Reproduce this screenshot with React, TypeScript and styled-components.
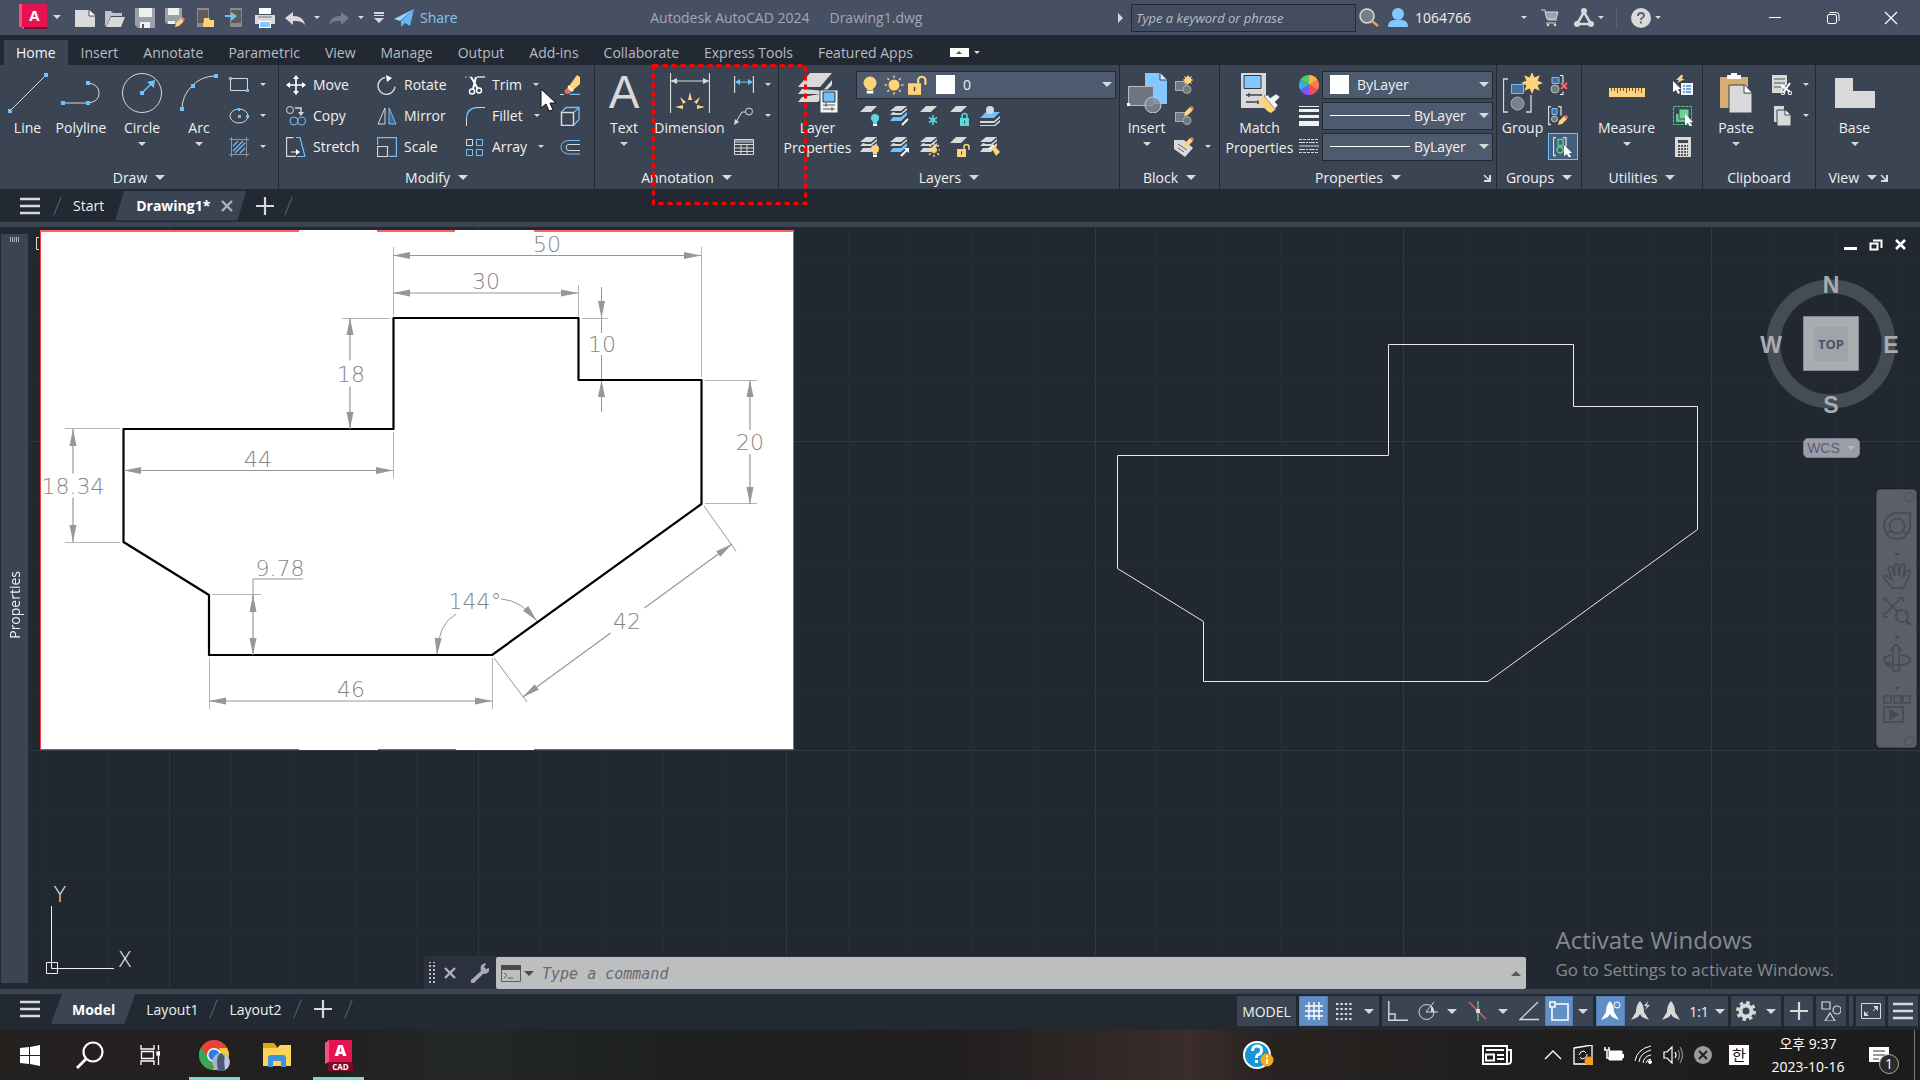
import React from "react";
import styled, { createGlobalStyle, css } from "styled-components";

const C = {
  title: "#474f63",
  dark: "#222933",
  panel: "#3b4453",
  field: "#4e5b6e",
  canvas: "#212830",
  text: "#f0f0f0",
  icon: "#d9d9d9",
  blue: "#6ec0ff",
  yellow: "#ffd37a",
  grey: "#727983",
};

const Global = createGlobalStyle`
  * { box-sizing: border-box; }
  html, body { margin: 0; height: 100%; overflow: hidden; background: ${C.dark}; }
  body, button, input, select { font-family: "Open Sans", "Noto Sans CJK KR", sans-serif; font-size: 14px; color: ${C.text}; }
  button { background: none; border: 0; padding: 0; margin: 0; cursor: default; white-space: nowrap; }
  svg { display: block; flex: none; }
`;

/* ---------- icons ---------- */

const W = C.icon;
const B = C.blue;
const Y = C.yellow;
const G = C.grey;
const star = (cx: number, cy: number, r: number, n = 8) =>
  Array.from({ length: n * 2 }, (_, i) => {
    const a = (Math.PI * i) / n - Math.PI / 2;
    const k = i % 2 ? r * 0.55 : r;
    return `${(cx + k * Math.cos(a)).toFixed(2)},${(cy + k * Math.sin(a)).toFixed(2)}`;
  }).join(" ");

const sheets = (bottom = W) => (
  <>
    <path d="M6 0h11l-6 5H0z" fill={W} />
    <path d="M3 6L0 9h11l6-5V2l-6 5H6z" fill={W} />
    <path d="M3 11l-3 4h11l6-6V6l-6 5z" fill={bottom} />
  </>
);
const oneSheet = <path d="M6 0h11l-6 6H0z" fill={W} />;
const pencil = (x: number, y: number) => (
  <g transform={`translate(${x} ${y})`}>
    <path d="M0 10l1-4 5-5 3 3-5 5z" fill={Y} />
    <path d="M6 1l2-1 2 2-1 2z" fill="#ff6a6a" />
  </g>
);
const blockShape = (
  <g stroke="#a9adb4" fill={G}>
    <rect x="1.5" y="6.5" width="11" height="9" />
    <circle cx="13" cy="14.500" r="4" />
  </g>
);
const cursor = (x: number, y: number) => (
  <path transform={`translate(${x} ${y})`} d="M0 0l8 8H5l2 4-2 1-2-4-3 2z" fill="#fff" />
);
const lock = (x: number, y: number, color: string, open: boolean, k = 1) => (
  <g transform={`translate(${x} ${y}) scale(${k})`}>
    <path d={open ? "M7 5V3a2.500 2.500 0 0 1 5 0v3" : "M2 5V3a2.500 2.500 0 0 1 5 0v2"} fill="none" stroke={color} strokeWidth="1.500" />
    <rect y="5" width="9" height="8" fill={color} />
    <path d="M4.500 7.500v3" stroke={C.panel} />
  </g>
);
const sun = (cx: number, cy: number, r: number) => (
  <g>
    <circle cx={cx} cy={cy} r={r} fill={Y} />
    <g stroke={Y} strokeWidth="1.400">
      {Array.from({ length: 8 }, (_, i) => (
        <path key={i} transform={`rotate(${i * 45} ${cx} ${cy})`} d={`M${cx} ${cy - r - 1.5}V${cy - r - 4}`} />
      ))}
    </g>
  </g>
);
const bulb = (cx: number, cy: number, r: number, c: string) => (
  <g>
    <circle cx={cx} cy={cy} r={r} fill={c} />
    <rect x={cx - r / 2} y={cy + r - 1} width={r} height="2" fill={c} />
    <rect x={cx - r / 2} y={cy + r + 1.500} width={r} height="2.500" fill="#fff" />
  </g>
);
const compass = <path d="M9 0q4 4 4 11l5 8-7-3-2-3-2 3-7 3 5-8q0-7 4-11z" />;

const icons: Record<string, React.ReactNode> = {
  logo: (
    <>
      <path d="M0 0h28v25H5L0 20z" fill="#7c0b26" />
      <path d="M0 0h5v25l-5-3z" fill="#f0557e" />
      <rect x="3" width="25" height="23" fill="#e5134f" />
    </>
  ),
  new: <><path d="M0 2h14l6 5v12H0z" fill={W} /><path d="M14 2v6h6" fill="#fff" stroke={C.title} /></>,
  open: <><path d="M0 3h6l2 2h9v3H6L1 18H0z" fill="#bfc2c7" /><path d="M6 9h14l-4 10H1z" fill={W} /></>,
  save: <><path d="M0 0h20v20H3l-3-3z" fill="#9b9fa8" /><path d="M4 0h13v9H4zM5 14h10v6H5z" fill="#f0f0f0" /><path d="M7 16h2v4H7z" fill="#555" /></>,
  saveas: <><path d="M0 0h17v16H2l-2-2z" fill="#9b9fa8" /><path d="M3 0h11v7H3zM3 13h7v3H3z" fill="#f0f0f0" />{pencil(10, 9)}</>,
  openm: <><path d="M2 0h12v19H2z" fill="#8b8b8b" /><path d="M3 2h10v13H3z" fill="#5f5b58" /><path d="M9 10h5l1 2h4v7H8z" fill={Y} /></>,
  savem: <><path d="M5 0h12v19H5z" fill="#8b8b8b" /><path d="M6 2h10v13H6z" fill="#5f5b58" /><path d="M0 7h6V4l6 4-6 5V9H0z" fill={B} /></>,
  print: <><path d="M4 0h12v6H4z" fill="#fff" /><path d="M0 7h20v9H0z" fill={W} /><path d="M4 13h12v7H4z" fill="#fff" /><path d="M5 14h10v5H5z" fill="#83c9ff" /><path d="M3 9h14" stroke="#777" /></>,
  undo: <path d="M8 4v4c7 0 11 3 12 9-3-4-7-4-12-4v4L0 10z" fill={W} />,
  redo: <path d="M12 4v4C5 8 1 11 0 17c3-4 7-4 12-4v4l8-7z" fill="#757c89" />,
  custom: <><path d="M5 4h10v2H5zM5 7h10v1H5z" fill={W} /><path d="M5 10h10l-5 5z" fill={W} /></>,
  plane: <><path d="M20 1L0 11l6 2z" fill="#9ad2ff" /><path d="M20 1L7 13v6l4-4 5 3z" fill="#62b6f2" /></>,
  play: <path d="M7 5l5 5-5 5z" fill={W} />,
  search: <><circle cx="8" cy="8" r="7" fill="#777e8b" stroke={W} strokeWidth="1.500" /><path d="M13 13l6 5" stroke="#d8a46a" strokeWidth="2.500" /></>,
  user: <><circle cx="10" cy="6" r="6" fill="#83c9ff" /><path d="M0 19c0-6 4-7 7-7h6c3 0 7 1 7 7z" fill="#83c9ff" /></>,
  cart: <><path d="M1 2h4l3 10h9" fill="none" stroke={W} /><path d="M5 4h13l-2 7H7z" fill="#9ca0a8" stroke={W} /><path d="M6 15h10" stroke={W} /><circle cx="8" cy="17" r="1.300" fill={W} /><circle cx="15" cy="17" r="1.300" fill={W} /></>,
  tri: <><path d="M10 4L3 16h14z" fill="none" stroke={W} strokeWidth="2.500" /><circle cx="10" cy="3" r="3" fill={W} /><circle cx="3" cy="16" r="3" fill={W} /><circle cx="17" cy="16" r="3" fill={W} /></>,
  help: <><circle cx="10" cy="10" r="10" fill={W} /><path d="M7 8q0-3 3-3t3 2.500q0 1.500-2 2.500-1 .5-1 2M10 13.500v2" fill="none" stroke="#59606e" strokeWidth="1.800" /></>,
  min: <path d="M4 9.500h12" stroke="#fff" />,
  restore: <g fill="none" stroke="#fff"><rect x="4.500" y="6.500" width="9" height="9" rx="1.500" /><path d="M6.500 4.500h7q2.500 0 2.500 2.500v6" /></g>,
  close: <path d="M4 4l12 12M16 4L4 16" stroke="#fff" strokeWidth="1.200" />,
  // draw
  line: <><path d="M2 38L38 2" stroke={W} /><path d="M0 36h4v4H0zM36 0h4v4h-4z" fill={B} /></>,
  polyline: <><path d="M2 30h26q11-2 10-11-1-8-11-9" fill="none" stroke={W} /><path d="M0 28h4v4H0zM25 8h4v4h-4zM25 28h4v4h-4z" fill={B} /></>,
  circle: <><circle cx="20" cy="20" r="19.500" fill="none" stroke={W} /><path d="M20 20l10-10" stroke={B} strokeWidth="1.500" /><path d="M18 18h4v4h-4zM33 7l-1 8-7-6z" fill={B} /></>,
  arc: <><path d="M3 37Q3 22 13 13 22 3 37 3" fill="none" stroke={W} /><path d="M1 34h4v4H1zM12 11h4v4h-4zM35 1h4v4h-4z" fill={B} /></>,
  rect: <><path d="M1.500 3.500h17v12h-17z" fill="none" stroke={W} /><path d="M0 2h3v3H0zM17 14h3v3h-3z" fill={B} /></>,
  ellipse: <><ellipse cx="10" cy="10" rx="9" ry="7" fill="none" stroke={W} /><path d="M9 2h2v3H9zM9 9h3v3H9zM17 9h3v3h-3z" fill={B} /></>,
  hatch: <><path d="M2.500 0v20M17.500 0v20M0 2.500h20M0 17.500h20" stroke="#8f959e" /><path d="M4 9l5-5M4 14L14 4M6 16L16 6M11 16l5-5" stroke={B} strokeWidth="1.200" /></>,
  // modify
  move: <><path d="M10 2v16M2 10h16" stroke="#fff" strokeWidth="1.600" /><path d="M10 0l3 4H7zM10 20l3-4H7zM0 10l4-3v6zM20 10l-4-3v6z" fill="#fff" /></>,
  rotate: <><path d="M8 2.500a8.500 8.500 0 1 0 10 9" fill="none" stroke={W} strokeWidth="1.400" /><path d="M9 0l6 3-5 4z" fill="#fff" /></>,
  trim: <><path d="M0 2h8" stroke={B} strokeDasharray="2 2" /><path d="M12 2h8" stroke={W} strokeWidth="1.500" /><path d="M6 2l7 12M11 2L8 14" stroke="#fff" strokeWidth="2" /><circle cx="7" cy="16.500" r="2.500" fill="none" stroke="#fff" strokeWidth="1.500" /><circle cx="14" cy="15.500" r="2.500" fill="none" stroke="#fff" strokeWidth="1.500" /></>,
  copy: <><circle cx="4" cy="4" r="3.500" fill="none" stroke={W} /><path d="M9 2h6v5" fill="none" stroke={W} strokeWidth="1.400" /><path d="M12 6h6l-3 4z" fill={W} /><circle cx="8" cy="15" r="4" fill="none" stroke={B} /><circle cx="15.500" cy="15" r="4" fill="none" stroke={B} /></>,
  mirror: <><path d="M8 2v16H1z" fill="none" stroke={W} /><path d="M12 2v16h7z" fill="#3f6a90" stroke={B} /></>,
  fillet: <><path d="M12 1.500h8M1.500 12v8" stroke={W} /><path d="M12 1.500Q2 2 1.500 12" fill="none" stroke={B} strokeWidth="1.300" /></>,
  stretch: <><path d="M10 19.500H.5V.5h7" fill="none" stroke={W} strokeWidth="1.300" /><path d="M10 .5h4l5 19h-8" fill="none" stroke={B} strokeWidth="1.200" /><path d="M5 15h7" stroke="#fff" /><path d="M10 12l4 3-4 3z" fill="#fff" /></>,
  scale: <><path d="M.5 8V.5h19v19H12" fill="none" stroke={B} strokeWidth="1.300" /><path d="M.5 9.500h10v10H.5z" fill="none" stroke={W} strokeWidth="1.200" /></>,
  array: <g fill="none"><path d="M1.500 2.500h6v6h-6z" stroke={W} /><path d="M11.500 2.500h6v6h-6zM1.500 12.500h6v6h-6zM11.500 12.500h6v6h-6z" stroke={B} /></g>,
  erase: <><path d="M17 0l3 2v7l-9 8-4-3z" fill={Y} /><path d="M7 13l4 4-2 2H6l-2-3z" fill="#f2635d" /><path d="M8 11l5 5" stroke="#fff" strokeWidth="2" /><path d="M0 19.500h4" stroke={W} /><path d="M10 19.500h10" stroke={B} strokeWidth="1.500" /></>,
  box: <><path d="M1.500 6.500h12v13h-12z" fill="none" stroke={W} strokeWidth="1.500" /><path d="M1.500 6L6 1.500h13v12l-5 5.500M14 6l5-4" fill="none" stroke={B} strokeWidth="1.300" /></>,
  offset: <g fill="none"><path d="M20 3.500H8q-7 1-7 6.500t7 7h12" stroke={B} /><path d="M20 7.500H9q-3 0-3 3t3 3h11" stroke={W} /></g>,
  // annotation
  dim: <><path d="M.5 0v40M39.500 0v40M1 8h38" stroke={W} strokeWidth="1.200" /><path d="M1 8l6-3v6zM39 8l-6-3v6z" fill={W} /><path d="M20 19l2 8h-4zM10 24l6 5-3 2zM30 24l-6 5 3 2zM5 34l8-2v4zM35 34l-8-2v4z" fill={Y} /></>,
  dimlin: <><path d="M.5 1v17M19.500 1v17" stroke={W} strokeWidth="1.300" /><path d="M2 7h16" stroke={B} /><path d="M1 7l5-3v6zM19 7l-5-3v6z" fill={B} /></>,
  leader: <><path d="M2 16L8 6h4" fill="none" stroke={W} /><circle cx="15" cy="5.500" r="3.500" fill="none" stroke={W} /><path d="M0 19l1-6 4 3z" fill={W} /></>,
  table: <><path d="M.5 2.500h19v15H.5zM.5 7.500h19M.5 11h19M.5 14.500h19M7 7v10M13 7v10" fill="none" stroke={W} /><path d="M1 3h18v3H1z" fill="#8a9099" /></>,
  // layers
  layerprops: <><path d="M12 0h22L22 14H0z" fill={W} /><path d="M4 16l-4 5h22L34 7v5l-6 6" fill={W} /><path d="M4 24l-4 5h20l8-9" fill={W} /><path d="M22 17h18v23H22z" fill="#f5f5f5" stroke={C.panel} /><path d="M25 19h12v10H25z" fill={B} stroke="#333" /><path d="M25 32h12M25 36h12M28 30v4M34 34v4" stroke="#555" /></>,
  bulb: bulb(10, 8, 6.500, Y),
  sun: sun(10, 10, 5.500),
  unlock: lock(0, 1, Y, true, 1.450),
  lay1: <>{oneSheet}{bulb(15, 12, 4, "#5fd7df")}</>,
  lay2: <>{sheets(B)}<path d="M12 19l6-6" stroke="#fff" strokeWidth="2" /></>,
  lay3: <>{oneSheet}<path d="M13 9v10M9 11.500l8 5M17 11.500l-8 5" stroke="#5fd7df" strokeWidth="1.600" /></>,
  lay4: <>{oneSheet}{lock(10, 7, "#5fd7df", false)}</>,
  lay5: <g transform="translate(0 3)"><path d="M6 3h14l-6 6H0z" fill={B} /><path d="M0 12h14l6-5v2l-6 5H0zM0 16h14l6-5v2l-6 5H0z" fill={W} /><circle cx="10" cy="1" r="4" fill={W} /></g>,
  lay6: <>{sheets()}{bulb(15, 12, 4, Y)}</>,
  lay7: <>{sheets(B)}<path d="M11 19l6-6" stroke="#fff" strokeWidth="2" /><path d="M14 11h5v5z" fill="#fff" /></>,
  lay8: <>{sheets()}{sun(14, 13, 3)}</>,
  lay9: <>{oneSheet}{lock(7, 7, Y, true)}</>,
  lay10: <>{sheets()}<path d="M11 10l3-2 6 7-4 4z" fill={Y} /><path d="M9 12l5-4" stroke="#fff" strokeWidth="2" /></>,
  // block
  insert: <><path d="M18 0h15l7 7v24H18z" fill="#83c9ff" /><path d="M33 0v7h7" fill="#d5ecff" stroke={C.panel} /><path d="M1.500 13.500h25v19h-25z" fill="#6f7682" stroke="#b9bcc2" /><circle cx="26" cy="32" r="8" fill="#858b95" fillOpacity=".8" stroke="#c9cbd0" /><path d="M0 30h3v3H0z" fill="#fff" /></>,
  blk1: <>{blockShape}<polygon points={star(14, 5, 5.500)} fill={Y} /></>,
  blk2: <>{blockShape}{pencil(10, 0)}</>,
  blk3: <><path d="M0 3h10l9 8-8 9L0 12z" fill={W} /><path d="M4 7l9 6M4 11l6 4" stroke="#666" />{pencil(10, 0)}</>,
  // properties
  match: <><path d="M1 0h25v35H1z" fill={W} /><path d="M4 2.500h17v13H4z" fill="#83c9ff" stroke="#333b47" /><path d="M6 22h16M6 29h13M9 20v4M18 27v4" stroke="#444" strokeWidth="1.400" /><path d="M18 28l6-5 12 13-5 4q-3 0-13-12z" fill={Y} /><path d="M24 23l4-1 2 3 6-4 4 3-5 5 3 3-3 4z" fill="#f5f5f5" stroke={C.panel} strokeWidth=".5" /></>,
  wheel: <>{["#ffb33c", "#ff7a4a", "#e8505b", "#8250ff", "#2cb7d8", "#53c56a"].map((c, i) => {
    const p = (k: number) => `${10 + 10 * Math.sin((k * Math.PI) / 3)} ${10 - 10 * Math.cos((k * Math.PI) / 3)}`;
    return <path key={c} d={`M10 10L${p(i)}A10 10 0 0 1 ${p(i + 1)}z`} fill={c} />;
  })}</>,
  weight: <path d="M0 0h20v1H0zM0 3h20v3H0zM0 9h20v3H0zM0 15h20v5H0z" fill="#f0f0f0" />,
  ltype: <><path d="M0 2.500h20M0 15.500h20" stroke={W} strokeDasharray="3 1" /><path d="M0 5.500h20M0 12.500h20" stroke={W} strokeDasharray="6 1 2 1" /><path d="M0 9h20" stroke={W} /></>,
  // groups
  group: <><path d="M5 6H.5v33H5M23 39h5V22" fill="none" stroke={W} strokeWidth="1.300" /><path d="M8.500 11.500h12v9h-12z" fill="#48709a" stroke={B} /><circle cx="14.500" cy="30.500" r="6.500" fill="#7b818b" stroke="#aaa" /><polygon points={star(29, 10, 11)} fill={Y} /></>,
  grp1: <><path d="M4 2.500h7v6H4z" fill="#48709a" stroke={B} /><circle cx="7" cy="14" r="4" fill={G} stroke="#bbb" /><path d="M12 .5h3v8M12 19.500h3v-3" fill="none" stroke="#fff" /><path d="M13 8l6 6M19 8l-6 6" stroke="#ff5f5f" strokeWidth="2" /></>,
  grp2: <><path d="M3 .5H.5v18H3M10 .5h3v9" fill="none" stroke={W} strokeWidth="1.300" /><path d="M4 2.500h5v6H4z" fill="#48709a" stroke={B} /><circle cx="6.500" cy="13" r="3" fill={G} stroke="#bbb" />{pencil(10, 9)}</>,
  grp3: <><path d="M3 .5H.5v18H3M10 .5h3v9" fill="none" stroke={W} strokeWidth="1.300" /><path d="M5 2.500h5v6H5z" fill="none" stroke="#5ad486" strokeWidth="1.300" /><circle cx="7" cy="13" r="3" fill="none" stroke="#5ad486" strokeWidth="1.300" />{cursor(11, 8)}</>,
  // utilities
  measure: <><path d="M2 15h36v9H2z" fill={Y} /><path d="M4.500 15v3M7.500 15v3M10.500 15v5M13.500 15v3M16.500 15v3M19.500 15v5M22.500 15v3M25.500 15v3M28.500 15v5M31.500 15v3M34.500 15v5" stroke="#6b5a36" /></>,
  ut1: <><path d="M8 0l-5 5h3L4 8l8-4H9l1-4z" fill={Y} />{cursor(0, 6)}<path d="M8 8h12v12H8z" fill="#f5f5f5" /><path d="M10 11h2M10 14h2M10 17h2M13 11h5M13 14h5M13 17h5" stroke="#3a8fe0" strokeWidth="1.400" /></>,
  ut2: <><path d="M.5 .5h18v18H.5z" fill="none" stroke="#5fc98a" strokeDasharray="3 1" /><path d="M3 8h9v8H3z" fill="#5fc98a" /><path d="M6 3h10v10H6z" fill="#6fd397" stroke="#37505a" />{cursor(12, 8)}</>,
  ut3: <><path d="M2 0h16v20H2z" fill={W} /><path d="M5 3h10v3H5z" fill="#444" /><path d="M5 9h10M5 12h10M5 15h10M5 18h10" stroke="#555" strokeWidth="2" strokeDasharray="2 1" /></>,
  // clipboard
  paste: <><path d="M4 4h28v31H4z" fill="#d8ac72" /><path d="M11 6V2h4V0h6v2h4v4z" fill="#fff" /><path d="M13 12h16l7 8v20H13z" fill={W} stroke={C.panel} /><path d="M28 12v8h8" fill="#fff" stroke={C.panel} /></>,
  cut: <><path d="M0 0h15v9l-6 9H0z" fill={W} /><path d="M2 4h11M2 8h11M2 12h7" stroke="#555" /><path d="M9 10l9 7M18 8L11 18" stroke="#fff" strokeWidth="2" /><circle cx="11" cy="18" r="1.800" fill="none" stroke="#fff" /><circle cx="18" cy="18" r="1.800" fill="none" stroke="#fff" /></>,
  copyclip: <><path d="M2 0h10v16H2z" fill={W} /><path d="M5 4h9l5 5v11H5z" fill={W} stroke={C.panel} /><path d="M13 4v5h5" fill="#fff" stroke={C.panel} /></>,
  base: <path d="M0 5h18v13h22v17H0z" fill={W} />,
  corner: <><path d="M4 4l6 6" stroke={W} strokeWidth="1.500" /><path d="M11 4v7H4v-2h5V4z" fill={W} /></>,
  menu: <path d="M0 3h20M0 10h20M0 17h20" stroke={W} strokeWidth="2.400" />,
  plus: <path d="M10 1v18M1 10h18" stroke={W} strokeWidth="2.200" />,
  x: <path d="M5 5l10 10M15 5L5 15" stroke="#aeb3bb" strokeWidth="2.400" />,
  // status bar
  gridon: <path d="M5 1v18M10 1v18M15 1v18M1 5h18M1 10h18M1 15h18" stroke="#fff" strokeWidth="1.400" />,
  dots: <path d="M2 3h16M2 8h16M2 13h16M2 18h16" stroke={W} strokeWidth="2" strokeDasharray="2.400 2" />,
  ortho: <path d="M.8 0v19.200H20M1 13h6v6" fill="none" stroke={W} strokeWidth="1.400" />,
  polar: <><circle cx="8.500" cy="11" r="7.500" fill="none" stroke={W} /><path d="M8 11h12M8 11l8-10" stroke={W} /><path d="M14 6v5" stroke={W} strokeWidth="2" /></>,
  iso: <><path d="M10 0v20" stroke="#55b877" strokeWidth="1.600" /><path d="M1 1l17 17" stroke="#d9605c" strokeWidth="1.400" /><path d="M8 8h4v4H8z" fill="#ddd" /></>,
  otrack: <path d="M19 1L1 18.500h19" fill="none" stroke={W} strokeWidth="1.300" />,
  osnap: <g fill="none" stroke="#fff" strokeWidth="1.600"><path d="M3 7v12h16V3H7" /><path d="M1 1h5v5H1z" /></g>,
  ann1: <g fill="#fff">{compass}<circle cx="16" cy="4" r="3" fill="none" stroke="#fff" /></g>,
  ann2: <g fill={W}>{compass}<path d="M17 0l-4 5h3l-2 4 5-5h-3z" /></g>,
  ann3: <g fill={W}>{compass}</g>,
  gear: <><circle cx="10" cy="10" r="5.500" fill="none" stroke={W} strokeWidth="4" /><circle cx="10" cy="10" r="8.500" fill="none" stroke={W} strokeWidth="3" strokeDasharray="3.400 3.280" /></>,
  isolate: <g fill="none" stroke={W} strokeWidth="1.200"><path d="M1 1h8v7H1z" /><circle cx="16" cy="9" r="4" /><path d="M9 12l5 8H4z" /></g>,
  full: <><path d="M.5 2.500h19v15H.5z" fill="none" stroke={W} /><path d="M12 5h5v5zM3 15v-5l5 5z" fill={W} /><path d="M16 6l-4 4M4 14l3-3" stroke={W} /></>,
  // navigation bar
  wheelnav: <g fill="none" stroke="#454b53" strokeWidth="1.600"><path d="M14 1h13v13a13 13 0 1 1-13-13z" /><circle cx="14" cy="14" r="7.500" /><path d="M3 22l6-3M25 22l-6-3" /></g>,
  hand: <path d="M9 27L1 17q0-3 3-2l5 4L5 7q1-3 4 0l3 8-1-11q2-3 4 0l1 11 2-11q3-2 4 1l-2 11 4-6q3-1 4 1l-5 11-3 5z" fill="none" stroke="#454b53" strokeWidth="1.600" />,
  zoomext: <g stroke="#454b53" strokeWidth="1.700" fill="none"><path d="M1 1l17 17M18 1L1 18M0 5V0h5M15 0h5v5M0 15v5h5" /><circle cx="19" cy="19" r="6" fill="#5b6067" /><path d="M23 24l5 4" strokeWidth="3" /></g>,
  orbit: <g fill="none" stroke="#454b53" strokeWidth="1.600"><path d="M10 27V6H8l5-6 5 6h-2v21z" /><path d="M8 11q-8 2-7 5 2 5 12 5 14 0 14-5 0-4-9-5" /><path d="M8 18l-5 2 5 4" fill="#454b53" /></g>,
  motion: <g fill="none" stroke="#454b53" strokeWidth="1.600"><path d="M1 1h7v7H1zM11 1h7v7h-7zM20 1h7v7h-7zM1 12h19v15H1z" /><path d="M7 15l8 4.500L7 24z" fill="#454b53" /></g>,
  // command line
  wrench: <path d="M1 17L11 8Q9 2 15 0l1 1-2 3 2 2 3-1q1 6-6 6L4 20q-4 1-3-3z" fill="#a9abb0" />,
  prompt: <><path d="M.5 2.500h19v16H.5z" fill="none" stroke="#5b5b5b" /><path d="M0 2h20v5H0z" fill="#4b4b4b" /><path d="M3 10l3 2.500L3 15M7 15h5" fill="none" stroke="#5b5b5b" /></>,
  // taskbar
  win: <path d="M0 3l9-1v8H0zM10 2l10-2v10H10zM0 11h9v8l-9-1zM10 11h10v10l-10-2z" fill="#fff" />,
  tsearch: <><circle cx="17" cy="11" r="9.500" fill="none" stroke="#fff" strokeWidth="2.200" /><path d="M10 18L1 27" stroke="#fff" strokeWidth="2.800" /></>,
  taskview: <g fill="none" stroke="#fff" strokeWidth="1.300"><path d="M1 0v4h13V0M1 20v-4h13v4M1.500 6.500h12v7h-12zM18.500 0v5M18.500 11v9" /><path d="M17 7h3v3h-3z" fill="#fff" /></g>,
  chrome: <><circle cx="15" cy="15" r="15" fill="#e6443a" /><path d="M15 30A15 15 0 0 1 2 7.500L11 20z" fill="#35a853" /><path d="M14 30l8-14-2-8h8a15 15 0 0 1-14 22z" fill="#fcc934" /><circle cx="15" cy="15" r="7" fill="#fff" /><circle cx="15" cy="15" r="5.500" fill="#2a7de1" /><circle cx="22" cy="22" r="9" fill="#9cb8c8" /><path d="M22 13q5 3 3 9l1 9h-7l-1-9q0-7 4-9z" fill="#4a5a72" /><path d="M26 15q5 3 4 11l-4 4z" fill="#cbbdf0" /></>,
  folder: <><path d="M0 2h11l3 4v5H0z" fill="#e8a513" /><path d="M0 7h14l3-3h11v21H0z" fill="#ffd25a" /><path d="M5 26V17q0-3 3-3h12q3 0 3 3v9h-5v-6h-8v6z" fill="#3d94dd" /></>,
  acad: <><path d="M0 3l4-3v22l-4 2z" fill="#f0557e" /><path d="M4 0h23v22H4z" fill="#e5134f" /><path d="M3 22h25v9H3z" fill="#7c0b26" /></>,
  thelp: <><circle cx="14" cy="15" r="13" fill="#1596d8" stroke="#fff" strokeWidth="2" /><path d="M9.500 11q0-5 4.500-5t4.500 4-4 5q-1 1-1 3M13.500 20v3" fill="none" stroke="#fff" strokeWidth="3" /><circle cx="24" cy="20" r="6.500" fill="#f5ab19" /><path d="M24 19v5M24 15.500v2" stroke="#fff" strokeWidth="2" /></>,
  news: <g fill="none" stroke="#fff" strokeWidth="2"><path d="M1 1h24v18H1zM25 5h4v11q0 3-4 3M4 5h18M4 9.500h8v6H4zM15 10h7M15 14h7" /></g>,
  chev: <path d="M2 14l8-8 8 8" fill="none" stroke="#fff" strokeWidth="1.400" />,
  update: <><path d="M1 3l18-3v20l-8-1H1z" fill="none" stroke="#fff" strokeWidth="1.300" /><path d="M6 10q1-4 5-4l2 2M14 9q0 4-5 5l-2-2" fill="none" stroke="#fff" /><circle cx="16" cy="16" r="4.500" fill="#ff9a1a" /></>,
  battery: <><path d="M5 6h13v9H5z" fill="#fff" stroke="#fff" /><path d="M19 9v4" stroke="#fff" strokeWidth="2" /><path d="M0 5h6M1 2v3M5 2v3M3 6v7h3" fill="none" stroke="#fff" strokeWidth="1.500" /></>,
  wifi: <g fill="none" stroke="#fff"><path d="M1 16Q3 4 17 1M5 17Q6 8 17 5M9 18q1-7 8-8M12 18q1-4 5-4" /><circle cx="16" cy="17" r="1.500" fill="#fff" /></g>,
  sound: <g fill="none" stroke="#fff" strokeWidth="1.200"><path d="M1 7h3l5-5v16l-5-5H1zM12 7q2 3 0 6" /><path d="M15 5q3 5 0 10M17 2q5 8 0 16" stroke="#888" /></g>,
  blocked: <><circle cx="10" cy="10" r="9" fill="#9b9b9b" /><path d="M6 6l8 8M14 6l-8 8" stroke="#222" strokeWidth="2" /></>,
  notice: <><path d="M0 2h20v15h-5v4l-4-4H0z" fill="#fff" /><path d="M4 6h12M4 10h12M4 14h6" stroke="#333" /></>,
  dmin: <path d="M3 13.500h13" stroke="#fff" strokeWidth="3" />,
  drestore: <path d="M4.500 8.500h7v6h-7zM7 5.500h8.500V13" fill="none" stroke="#fff" strokeWidth="2" />,
  dclose: <path d="M5 5l9 9M14 5l-9 9" stroke="#fff" strokeWidth="2.600" />,
};

const Icon = ({ n, s = 20, h }: { n: string; s?: number; h?: number }) => (
  <svg width={s} height={h ?? s} viewBox={`0 0 ${s} ${h ?? s}`} aria-hidden="true">{icons[n]}</svg>
);
const Caret = ({ w = 8, c = W }: { w?: number; c?: string }) => (
  <svg width={w} height={w / 2} viewBox="0 0 8 4" aria-hidden="true"><path d="M0 0h8L4 4z" fill={c} /></svg>
);

/* ---------- shell ---------- */

const Page = styled.div`display: flex; flex-direction: column; height: 100vh; min-width: 0; background: ${C.dark};`;

const TitleBar = styled.header`
  display: grid; grid-template-columns: auto 1fr auto; align-items: center;
  height: 35px; flex: none; background: ${C.title};
`;
const Group = styled.div`display: flex; align-items: center; height: 100%;`;
const Tool = styled.button<{ $w?: number }>`
  display: flex; align-items: center; justify-content: center; gap: 4px;
  flex: none; width: ${(p) => p.$w ?? 30}px; height: 100%;
`;
const AppButton = styled.button`
  display: flex; align-items: center; gap: 6px; height: 35px; width: 70px; padding: 0 0 2px 19px;
`;
const LogoMark = styled.span`
  display: grid; width: 28px; height: 25px;
  > * { grid-area: 1 / 1; }
  b { color: #fff; font-size: 15px; line-height: 22px; text-align: center; padding-left: 3px; }
`;
const ShareButton = styled.button`display: flex; align-items: center; gap: 6px; padding-left: 4px; color: #84c6f2; line-height: 35px;`;
const WindowTitle = styled.h1`
  margin: 0; display: flex; gap: 20px; justify-content: center; font-size: 14px; font-weight: 400; color: #a3a8b3; white-space: nowrap;
`;
const SearchInput = styled.input`
  width: 225px; height: 28px; margin: 0 1px 0 4px; padding: 0 4px; background: #434b5e; border: 1px solid ${C.dark};
  font-size: 13px; font-style: italic; outline: 0;
  &::placeholder { color: #b9bdc6; opacity: 1; }
`;
const UserButton = styled.button`
  display: flex; align-items: center; gap: 7px; width: 152px; height: 100%; padding: 0 6px 0 7px;
  span { flex: 1; text-align: left; }
`;
const Divider = styled.i`width: 1px; height: 22px; margin: 0 5px; background: #5b657a;`;
const DragArea = styled.i`width: 76px;`;

const Tabs = styled.nav`display: flex; align-items: flex-end; gap: 1px; height: 30px; flex: none; padding-left: 4px; background: ${C.dark};`;
const RibbonTab = styled.button<{ $on?: boolean }>`
  height: 25px; padding: 0 12px; line-height: 24px; color: ${(p) => (p.$on ? "#f5f5f5" : "#b8bcc3")};
  background: ${(p) => (p.$on ? C.panel : "transparent")};
`;
const RibbonToggle = styled.button`
  display: flex; align-items: center; gap: 5px; height: 25px; margin-left: 24px;
  span { display: grid; place-items: center; width: 19px; height: 9px; background: #fff; transform: rotate(180deg); }
`;

/* ---------- ribbon ---------- */

const Ribbon = styled.section`display: flex; height: 124px; flex: none; background: ${C.panel};`;
const PanelBox = styled.section<{ $w: number; $last?: boolean }>`
  flex: 0 0 ${(p) => p.$w}px;
  display: grid; grid-template-rows: 100px 24px; border-right: ${(p) => (p.$last ? 0 : 1)}px solid ${C.dark};
`;
const PanelBody = styled.div<{ $pad?: number }>`display: flex; min-width: 0; padding-left: ${(p) => p.$pad ?? 0}px;`;
const PanelFoot = styled.div`display: grid; grid-template-columns: 1fr auto 1fr; align-items: center; padding: 1px 2px 0;`;
const PanelTitle = styled.button`grid-column: 2; display: flex; align-items: center; gap: 8px; line-height: 23px;`;
const Launcher = styled.button`justify-self: end;`;

const Panel = ({ title, w, pad, caret = true, launcher, last, children }: {
  title: string; w: number; pad?: number; caret?: boolean; launcher?: boolean; last?: boolean; children: React.ReactNode;
}) => (
  <PanelBox $w={w} $last={last} aria-label={title}>
    <PanelBody $pad={pad}>{children}</PanelBody>
    <PanelFoot>
      <PanelTitle>{title}{caret && <Caret w={10} />}</PanelTitle>
      {launcher && <Launcher aria-label={`${title} settings`}><Icon n="corner" s={14} /></Launcher>}
    </PanelFoot>
  </PanelBox>
);

const BigButton = styled.button<{ $w: number }>`
  display: flex; flex-direction: column; align-items: center; flex: none; width: ${(p) => p.$w}px; padding-top: 8px;
`;
const BigLabel = styled.span`margin: 5px 0 4px; line-height: 20px; text-align: center; white-space: pre;`;
const BigLetter = styled.span`height: 40px; font-family: "Liberation Sans", sans-serif; font-size: 46px; line-height: 38px; color: ${W};`;

const Big = ({ n, label, w, caret }: { n: string; label: string; w: number; caret?: boolean }) => (
  <BigButton $w={w}>
    {n === "A" ? <BigLetter aria-hidden="true">A</BigLetter> : <Icon n={n} s={40} />}
    <BigLabel>{label}</BigLabel>
    {caret && <Caret />}
  </BigButton>
);

const Rows = styled.div<{ $cols: string; $pad?: number }>`
  display: grid; grid-template-columns: ${(p) => p.$cols}; grid-template-rows: repeat(3, 31px);
  padding: 4px 0 0 ${(p) => p.$pad ?? 0}px; flex: none;
`;
const Small = styled.button<{ $on?: boolean }>`
  display: flex; align-items: center; gap: 7px; justify-self: start; height: 27px; align-self: center;
  ${(p) => p.$on && css`width: 30px; justify-content: center; background: #45607e; border: 1px solid ${B};`}
`;
const SmallPair = styled.div`display: flex; align-items: center; gap: 11px;`;
const CaretButton = styled.button`height: 20px; display: flex; align-items: center;`;
const IconCell = ({ n, label, more }: { n: string; label: string; more?: boolean }) => (
  <SmallPair>
    <Small aria-label={label}><Icon n={n} /></Small>
    {more && <CaretButton aria-label={`More ${label}`}><Caret w={6} /></CaretButton>}
  </SmallPair>
);
const LabelCell = ({ n, label, more }: { n: string; label: string; more?: boolean }) => (
  <SmallPair>
    <Small><Icon n={n} />{label}</Small>
    {more && <CaretButton aria-label={`More ${label}`}><Caret w={6} /></CaretButton>}
  </SmallPair>
);

const Stack = styled.div`flex: 1; min-width: 0; padding: 4px 3px 0 0;`;
const StackRow = styled.div`display: flex; align-items: center; height: 31px; gap: 10px; padding-left: 4px;`;
const Combo = styled.div`
  display: flex; align-items: center; gap: 4px; height: 28px; width: 100%; padding: 0 3px; background: ${C.field}; border: 1px solid ${C.dark};
`;
const Cell = styled.div`display: flex; align-items: center; height: 31px;`;
const Swatch = styled.i`width: 19px; height: 19px; flex: none; margin: 0 4px; background: #fff;`;
const Stroke = styled.i`width: 80px; height: 1px; flex: none; margin-left: 4px; background: #fff;`;
const PlainSelect = styled.select`
  flex: 1; min-width: 0; appearance: none; background: transparent; border: 0; outline: 0; padding: 0; margin: 0; height: 24px;
  option { background: ${C.field}; }
`;

/* ---------- document tabs ---------- */

const DocTabs = styled.nav<{ $h: number }>`display: flex; align-items: center; height: ${(p) => p.$h}px; flex: none; background: ${C.dark};`;
const MenuButton = styled.button<{ $w: number }>`width: ${(p) => p.$w}px; height: 100%; padding-left: 20px; flex: none;`;
const Slash = styled.i`width: 1px; height: 20px; flex: none; margin: 0 4px; background: #566072; transform: rotate(22deg);`;
const DocTab = styled.button`padding: 0 11px; height: 30px;`;
const ActiveTab = styled.div<{ $skew: number; $end: number }>`
  display: flex; align-items: center; gap: 7px; height: 30px; padding: 0 ${(p) => p.$end}px 0 21px; background: ${C.panel};
  clip-path: polygon(${(p) => p.$skew}px 0, 100% 0, calc(100% - ${(p) => p.$skew}px) 100%, 0 100%);
  button { font-weight: 700; color: #fff; }
`;
const Strip = styled.div`height: 5px; flex: none; background: ${C.panel};`;

/* ---------- work area ---------- */

const Work = styled.main`display: flex; flex: 1; min-height: 0;`;
const Palette = styled.aside`
  display: flex; flex-direction: column; align-items: center; width: 27px; margin: 7px 3px 6px 1px; padding-bottom: 16px; flex: none; background: ${C.panel};
`;
const Grip = styled.i`
  width: 10px; height: 5px; margin-top: 3px;
  background: repeating-linear-gradient(90deg, #aab0ba 0 1px, transparent 1px 2px);
`;
const PaletteTitle = styled.h2`
  margin: auto 0; writing-mode: vertical-rl; transform: rotate(180deg); font-size: 14px; font-weight: 400; line-height: 26px;
`;
const Viewport = styled.section`position: relative; flex: 1; min-width: 0; background: ${C.canvas}; overflow: hidden;`;
const Scene = styled.svg`position: absolute; inset: 0; width: 100%; height: 100%;`;
const DocButtons = styled.div`position: absolute; right: 9px; top: 8px; display: flex; gap: 5px;`;
const DocButton = styled.button`width: 20px; height: 20px;`;
const ViewCube = styled.div`position: absolute; right: 18px; top: 44px; width: 142px; display: flex; flex-direction: column; align-items: center; gap: 19px;`;
const WcsButton = styled.button`
  display: flex; align-items: center; justify-content: center; gap: 7px; width: 57px; height: 20px; border-radius: 5px;
  background: #9b9dab; border: 1px solid #7d808f; color: #5c606b; font-family: "Liberation Sans", sans-serif; font-size: 14px;
`;
const NavBar = styled.div`
  position: absolute; right: 3px; top: 262px; width: 41px; height: 259px; display: flex; flex-direction: column; align-items: center;
  padding-top: 2px; border-radius: 4px; background: #5b6066; border: 1px solid #444a51; box-shadow: 0 0 2px #111;
`;
const NavButton = styled.button<{ $h: number }>`
  display: flex; flex-direction: column; align-items: center; justify-content: space-between; height: ${(p) => p.$h}px; flex: none; padding-bottom: 5px;
`;
const NavDot = styled.button`align-self: flex-end; width: 10px; height: 10px; margin-right: 2px; border: 1px solid #4c5259; border-radius: 50%; flex: none;`;
const NavGap = styled.i`height: 10px; flex: none;`;
const Watermark = styled.div`
  position: absolute; right: 86px; bottom: 4px; color: #868a90; font-size: 17px; line-height: 30px; white-space: nowrap;
  strong { display: block; font-size: 24px; font-weight: 400; line-height: 30px; }
`;
const Command = styled.form`
  position: absolute; left: 393px; right: 394px; bottom: 0; height: 33px; display: flex; align-items: center; background: #2b313e; border-radius: 3px 3px 0 0;
`;
const CommandGrip = styled.i`
  width: 7px; height: 21px; margin: 0 0 0 5px;
  background: repeating-linear-gradient(0deg, #b9bcc2 0 2px, transparent 2px 4px);
  mask: repeating-linear-gradient(90deg, #000 0 2px, transparent 2px 4px);
`;
const CommandField = styled.div`
  display: flex; align-items: center; gap: 3px; flex: 1; height: 32px; margin-top: 1px; padding: 0 5px; background: #bdbec0; border-radius: 2px;
`;
const CommandInput = styled.input`
  flex: 1; border: 0; outline: 0; background: transparent; padding: 2px 5px 0; color: #333; font-family: "DejaVu Sans Mono", monospace; font-size: 15px; font-style: italic;
  &::placeholder { color: #696a6d; opacity: 1; }
`;
const UpCaret = styled.button`transform: rotate(180deg);`;

/* ---------- status + taskbar ---------- */

const StatusRow = styled.footer`display: flex; justify-content: space-between; align-items: flex-start; height: 36px; flex: none; background: ${C.dark};`;
const StatusTools = styled.div`display: flex; gap: 3px; padding: 2px 2px 4px 0;`;
const Segment = styled.div`display: flex; background: ${C.panel};`;
const StatusButton = styled.button<{ $w: number; $on?: boolean }>`
  display: flex; align-items: center; justify-content: center; width: ${(p) => p.$w}px; height: 30px; flex: none;
  ${(p) => p.$on && css`background: #5f8fc4; border: 1px solid #4f7fb4;`}
`;
const Taskbar = styled.footer`
  display: flex; align-items: center; height: 50px; flex: none;
  background: linear-gradient(90deg, #24211f 0%, #22201f 17%, #242828 24%, #1e2021 34%, #211f1e 50%, #3a2d2b 62%, #292321 66%, #201f1e 78%, #1c1c1c 100%);
`;
const TaskButton = styled.button<{ $w: number; $on?: boolean }>`
  display: flex; align-items: center; justify-content: center; flex: none; width: ${(p) => p.$w}px; height: 50px;
  border-top: 3px solid transparent; border-bottom: 3px solid ${(p) => (p.$on ? "#7fd6d3" : "transparent")};
`;
const AcadMark = styled.span`
  display: grid; width: 28px; height: 31px;
  > svg { grid-area: 1 / 1; }
  > span { grid-area: 1 / 1; display: grid; grid-template-rows: 22px 9px; justify-items: center; padding-left: 4px; color: #fff; font-weight: 700; }
  b { font-size: 16px; line-height: 21px; }
  small { font-size: 8px; line-height: 9px; }
`;
const Apps = styled.div`display: flex; margin-left: 10px;`;
const Tray = styled.div`display: flex; align-items: center; gap: 180px; height: 50px; margin-left: auto;`;
const TrayIcons = styled.div`display: flex; align-items: center; flex: none;`;
const PeekLine = styled.i`width: 1px; height: 50px; margin-right: 5px; background: #777;`;
const Lang = styled.span`display: grid; place-items: center; width: 20px; height: 20px; background: #fff; color: #111; font-size: 15px; line-height: 18px;`;
const Clock = styled.button`width: 96px; height: 50px; font-size: 14px; line-height: 23px; color: #fff; text-align: center;`;
const NoticeButton = styled.button`position: relative; width: 58px; height: 50px; padding: 0 0 0 13px;`;
const Count = styled.span`
  position: absolute; left: 23px; top: 24px; width: 20px; height: 20px; border: 1px solid #aaa; border-radius: 50%; background: #2b2b2b; color: #fff; font-size: 14px; line-height: 18px; text-align: center;
`;
const Callout = styled.svg`position: fixed; left: 0; top: 0; width: 100%; height: 260px; pointer-events: none;`;

/* ---------- drawing ---------- */

const range = (start: number, step: number, end: number) => {
  const out: number[] = [];
  for (let v = start; v < end; v += step) out.push(v);
  return out;
};
const STEP = 61.68;
const Grid = () => (
  <g>
    {range(46.6, STEP, 4000).map((x, i) => (
      <path key={"v" + i} d={`M${Math.floor(x) + 0.5} 200V2400`} stroke={i % 5 === 2 ? "#2f3847" : "#262d39"} />
    ))}
    {range(256.6, STEP, 2400).map((y, i) => (
      <path key={"h" + i} d={`M0 ${Math.floor(y) + 0.5}H4000`} stroke={i % 5 === 3 ? "#2f3847" : "#262d39"} />
    ))}
  </g>
);

const DG = "#979797";
const Head = ({ x, y, a }: { x: number; y: number; a: number }) => (
  <path transform={`translate(${x} ${y}) rotate(${a})`} d="M0 0l-17 3.500v-7z" fill={DG} />
);
const Dim = ({ p, gap }: { p: [number, number, number, number]; gap?: number }) => {
  const [x1, y1, x2, y2] = p;
  const a = (Math.atan2(y2 - y1, x2 - x1) * 180) / Math.PI;
  const len = Math.hypot(x2 - x1, y2 - y1);
  const k = gap ? gap / len / 2 : 0;
  const mx = (x1 + x2) / 2, my = (y1 + y2) / 2;
  return (
    <g stroke="none">
      <path d={`M${x1} ${y1}L${mx - (x2 - x1) * k} ${my - (y2 - y1) * k}M${mx + (x2 - x1) * k} ${my + (y2 - y1) * k}L${x2} ${y2}`} stroke={DG} strokeWidth="1.200" />
      <Head x={x2} y={y2} a={a} />
      <Head x={x1} y={y1} a={a + 180} />
    </g>
  );
};
const labels: [string, number, number][] = [
  ["50", 547, 252], ["30", 486, 289], ["10", 602, 352], ["18", 351, 382], ["44", 258, 467], ["18.34", 73, 494],
  ["20", 750, 450], ["9.78", 280, 576], ["46", 351, 697], ["42", 627, 629], ["144°", 475, 609],
];

const Reference = () => (
  <g>
    <path d="M40 230h754v520H40z" fill="#fff" />
    <path d="M40.500 230v520M793.500 230v520" stroke="#ff3b3b" />
    <path d="M40 231h259M377 231h78M534 231h260" stroke="#ff6464" strokeWidth="2" />
    <path d="M40 749.500h259M378 749.500h78M534 749.500h260" stroke="#ff2f2f" />
    <g stroke="#b4b4b4" fill="none">
      <path d="M393.500 247v69M701.500 247v130M578.500 285v31M342 318.500h48M582 318.500h26M65 428.500h55M65 542.500h55M393.500 432v46M705 380.500h52M705 503.500h52M212 594.500h49M209.500 658v51M492.500 658v51" />
      <path d="M494 658l33 44M704 506l32 45M253 600v-21h50" stroke={DG} />
      <path d="M437 654q1-30 19-40M501 599q20 1 36 22M601.500 287v46M601.500 355v57" stroke={DG} />
    </g>
    <path d="M123.500 429H393.500V318H578.500V380H701.500V504L492 655H209V595L123.500 542z" fill="none" stroke="#000" strokeWidth="2.200" strokeLinejoin="round" />
    <Dim p={[393, 255.5, 701, 255.5]} />
    <Dim p={[393, 293, 578, 293]} />
    <Dim p={[350, 318, 350, 429]} gap={26} />
    <Dim p={[124, 470.5, 393, 470.5]} />
    <Dim p={[73, 429, 73, 542]} gap={24} />
    <Dim p={[750, 380, 750, 504]} gap={24} />
    <Dim p={[253, 595, 253, 655]} />
    <Dim p={[209, 701, 492, 701]} />
    <Dim p={[523, 697, 732, 544]} gap={42} />
    <Head x={601.5} y={318} a={90} />
    <Head x={601.5} y={380} a={-90} />
    <Head x={437} y={655} a={94} />
    <Head x={537} y={621} a={48} />
    <g fill="#868686" fontFamily="DejaVu Sans" fontWeight="200" fontSize="22" textAnchor="middle">
      {labels.map(([t, x, y]) => <text key={t} x={x} y={y}>{t}</text>)}
    </g>
  </g>
);

const Cube = () => (
  <svg width="142" height="148" viewBox="1760 271 142 148" role="img" aria-label="View cube">
    <circle cx="1831" cy="344" r="57.500" fill="none" stroke="#464c54" strokeWidth="14" />
    <path d="M1803.500 316.500h55v54h-55z" fill="#a9adb0" stroke="#85898c" />
    <path d="M1814 327h34v34h-34z" fill="#9fa3ac" />
    <text x="1831" y="349" textAnchor="middle" fontFamily="Open Sans" fontWeight="700" fontSize="13" fill="#4c5460">TOP</text>
    <g fontFamily="Liberation Sans" fontWeight="700" fontSize="23" fill="#a9acaf" textAnchor="middle">
      <text x="1831" y="293">N</text><text x="1831" y="413">S</text><text x="1771" y="353">W</text><text x="1891" y="353">E</text>
    </g>
  </svg>
);

/* ---------- page ---------- */

const ribbonTabs = ["Home", "Insert", "Annotate", "Parametric", "View", "Manage", "Output", "Add-ins", "Collaborate", "Express Tools", "Featured Apps"];
const trayItems: [string, string, number][] = [
  ["chev", "Hidden icons", 30], ["update", "Updates", 30], ["battery", "Battery", 32],
  ["wifi", "Network", 28], ["sound", "Volume", 30], ["blocked", "Blocked", 30],
];

export default function App() {
  return (
    <Page>
      <Global />
      <TitleBar>
        <Group>
          <AppButton aria-label="Application menu">
            <LogoMark><Icon n="logo" s={28} h={25} /><b>A</b></LogoMark><Caret />
          </AppButton>
          {["new", "open", "save", "saveas", "openm", "savem", "print", "undo"].map((n) => <Tool key={n} aria-label={n}><Icon n={n} /></Tool>)}
          <Tool $w={14} aria-label="Undo list"><Caret w={6} /></Tool>
          <Tool aria-label="redo"><Icon n="redo" /></Tool>
          <Tool $w={14} aria-label="Redo list"><Caret w={6} /></Tool>
          <Tool $w={22} aria-label="Customize toolbar"><Icon n="custom" /></Tool>
          <ShareButton><Icon n="plane" />Share</ShareButton>
        </Group>
        <WindowTitle><span>Autodesk AutoCAD 2024</span><span>Drawing1.dwg</span></WindowTitle>
        <Group>
          <Tool $w={12} aria-label="Collapse search"><Icon n="play" /></Tool>
          <SearchInput aria-label="Search" placeholder="Type a keyword or phrase" />
          <Tool $w={24} aria-label="Run search"><Icon n="search" /></Tool>
          <UserButton><Icon n="user" /><span>1064766</span><Caret w={6} /></UserButton>
          <Tool $w={34} aria-label="Store"><Icon n="cart" /></Tool>
          <Tool $w={44} aria-label="Autodesk apps"><Icon n="tri" /><Caret w={6} /></Tool>
          <Divider />
          <Tool $w={48} aria-label="Help"><Icon n="help" /><Caret w={6} /></Tool>
          <DragArea />
          <Tool $w={58} aria-label="Minimize"><Icon n="min" /></Tool>
          <Tool $w={58} aria-label="Restore"><Icon n="restore" /></Tool>
          <Tool $w={58} aria-label="Close"><Icon n="close" /></Tool>
        </Group>
      </TitleBar>

      <Tabs>
        {ribbonTabs.map((t, i) => <RibbonTab key={t} $on={i === 0}>{t}</RibbonTab>)}
        <RibbonToggle aria-label="Minimize ribbon"><span><Caret w={6} c="#555" /></span><Caret w={6} /></RibbonToggle>
      </Tabs>

      <Ribbon>
        <Panel title="Draw" w={279} pad={1}>
          <Big n="line" label="Line" w={53} />
          <Big n="polyline" label="Polyline" w={54} />
          <Big n="circle" label="Circle" w={68} caret />
          <Big n="arc" label="Arc" w={46} caret />
          <Rows $cols="50px" $pad={7}>
            <IconCell n="rect" label="Rectangle" more /><IconCell n="ellipse" label="Ellipse" more /><IconCell n="hatch" label="Hatch" more />
          </Rows>
        </Panel>
        <Panel title="Modify" w={316} pad={7}>
          <Rows $cols="91px 88px 95px 24px">
            <LabelCell n="move" label="Move" /><LabelCell n="rotate" label="Rotate" /><LabelCell n="trim" label="Trim" more /><IconCell n="erase" label="Erase" />
            <LabelCell n="copy" label="Copy" /><LabelCell n="mirror" label="Mirror" /><LabelCell n="fillet" label="Fillet" more /><IconCell n="box" label="Explode" />
            <LabelCell n="stretch" label="Stretch" /><LabelCell n="scale" label="Scale" /><LabelCell n="array" label="Array" more /><IconCell n="offset" label="Offset" />
          </Rows>
        </Panel>
        <Panel title="Annotation" w={184} pad={1}>
          <Big n="A" label="Text" w={56} caret />
          <Big n="dim" label="Dimension" w={75} />
          <Rows $cols="44px" $pad={7}>
            <IconCell n="dimlin" label="Linear" more /><IconCell n="leader" label="Leader" more /><IconCell n="table" label="Table" />
          </Rows>
        </Panel>
        <Panel title="Layers" w={341}>
          <Big n="layerprops" label={"Layer\nProperties"} w={77} />
          <Stack>
            <Cell>
              <Combo>
                <Icon n="bulb" /><Icon n="sun" /><Icon n="unlock" /><Swatch />
                <PlainSelect aria-label="Layer"><option>0</option></PlainSelect><Caret w={10} />
              </Combo>
            </Cell>
            <StackRow>{[1, 2, 3, 4, 5].map((i) => <Small key={i} aria-label={`Layer tool ${i}`}><Icon n={`lay${i}`} /></Small>)}</StackRow>
            <StackRow>{[6, 7, 8, 9, 10].map((i) => <Small key={i} aria-label={`Layer tool ${i}`}><Icon n={`lay${i}`} /></Small>)}</StackRow>
          </Stack>
        </Panel>
        <Panel title="Block" w={100}>
          <Big n="insert" label="Insert" w={53} caret />
          <Rows $cols="42px" $pad={1}>
            <IconCell n="blk1" label="Create block" /><IconCell n="blk2" label="Edit block" /><IconCell n="blk3" label="Edit attributes" more />
          </Rows>
        </Panel>
        <Panel title="Properties" w={277} launcher>
          <Big n="match" label={"Match\nProperties"} w={79} />
          <Rows $cols="23px 171px">
            <Cell><Icon n="wheel" /></Cell>
            <Cell><Combo><Swatch /><PlainSelect aria-label="Color"><option>ByLayer</option></PlainSelect><Caret w={10} /></Combo></Cell>
            <Cell><Icon n="weight" /></Cell>
            <Cell><Combo><Stroke /><PlainSelect aria-label="Lineweight"><option>ByLayer</option></PlainSelect><Caret w={10} /></Combo></Cell>
            <Cell><Icon n="ltype" /></Cell>
            <Cell><Combo><Stroke /><PlainSelect aria-label="Linetype"><option>ByLayer</option></PlainSelect><Caret w={10} /></Combo></Cell>
          </Rows>
        </Panel>
        <Panel title="Groups" w={85}>
          <Big n="group" label="Group" w={51} />
          <Rows $cols="30px">
            <Cell><Small aria-label="Ungroup"><Icon n="grp1" s={24} h={20} /></Small></Cell>
            <Cell><Small aria-label="Group edit"><Icon n="grp2" s={24} h={20} /></Small></Cell>
            <Small $on aria-label="Group selection"><Icon n="grp3" /></Small>
          </Rows>
        </Panel>
        <Panel title="Utilities" w={121}>
          <Big n="measure" label="Measure" w={89} caret />
          <Rows $cols="24px" $pad={2}>
            <IconCell n="ut1" label="Quick select" /><IconCell n="ut2" label="Select all" /><IconCell n="ut3" label="Calculator" />
          </Rows>
        </Panel>
        <Panel title="Clipboard" w={113} caret={false}>
          <Big n="paste" label="Paste" w={66} caret />
          <Rows $cols="42px" $pad={3}>
            <IconCell n="cut" label="Cut" more /><IconCell n="copyclip" label="Copy clip" more />
          </Rows>
        </Panel>
        <Panel title="View" w={77} launcher last>
          <Big n="base" label="Base" w={77} caret />
        </Panel>
      </Ribbon>

      <DocTabs $h={33} aria-label="Drawings">
        <MenuButton $w={53} aria-label="File tabs menu"><Icon n="menu" /></MenuButton>
        <Slash />
        <DocTab>Start</DocTab>
        <ActiveTab $skew={9} $end={9}><button>Drawing1*</button><button aria-label="Close drawing"><Icon n="x" /></button></ActiveTab>
        <Tool $w={38} aria-label="New drawing"><Icon n="plus" /></Tool>
        <Slash />
      </DocTabs>
      <Strip />

      <Work>
        <Palette><Grip /><PaletteTitle>Properties</PaletteTitle></Palette>
        <Viewport>
          <Scene role="img" aria-label="Model space">
            <g transform="translate(-31 -227)">
              <Grid />
              <path d="M39 237.500h-2.500v12H39" fill="none" stroke="#ddd" />
              <Reference />
              <path d="M1117.500 455.500H1388.500V344.500H1573.500V406.500H1697.500V529.500L1488 681.500H1203.500V621.500L1117.500 568.500z" fill="none" stroke="#e8e8e8" />
              <g stroke="#f0f0f0" fill="none"><path d="M51.500 906v62.500H114M46.500 962.500h11v11h-11z" /></g>
              <g fill="#f0f0f0" fontFamily="DejaVu Sans" fontWeight="200" fontSize="21" textAnchor="middle">
                <text x="60" y="902">Y</text><text x="125" y="967">X</text>
              </g>
            </g>
          </Scene>
          <DocButtons>
            <DocButton aria-label="Minimize drawing"><Icon n="dmin" /></DocButton>
            <DocButton aria-label="Restore drawing"><Icon n="drestore" /></DocButton>
            <DocButton aria-label="Close drawing window"><Icon n="dclose" /></DocButton>
          </DocButtons>
          <ViewCube><Cube /><WcsButton>WCS<Caret c="#b5b7c2" /></WcsButton></ViewCube>
          <NavBar>
            <NavDot aria-label="Close navigation bar" />
            <NavGap />
            <NavButton $h={49} aria-label="Steering wheel"><Icon n="wheelnav" s={28} /><Caret w={6} c="#454b53" /></NavButton>
            <NavButton $h={36} aria-label="Pan"><Icon n="hand" s={28} /></NavButton>
            <NavButton $h={47} aria-label="Zoom extents"><Icon n="zoomext" s={28} /><Caret w={6} c="#454b53" /></NavButton>
            <NavButton $h={51} aria-label="Orbit"><Icon n="orbit" s={28} /><Caret w={6} c="#454b53" /></NavButton>
            <NavButton $h={41} aria-label="Show motion"><Icon n="motion" s={28} /></NavButton>
            <NavDot aria-label="Navigation bar options" />
          </NavBar>
          <Watermark><strong>Activate Windows</strong>Go to Settings to activate Windows.</Watermark>
          <Command onSubmit={(e) => e.preventDefault()}>
            <CommandGrip />
            <Tool $w={27} type="button" aria-label="Close command line"><Icon n="x" /></Tool>
            <Tool $w={33} type="button" aria-label="Customize command line"><Icon n="wrench" /></Tool>
            <CommandField>
              <Icon n="prompt" /><Caret w={10} c="#4b4b4b" />
              <CommandInput aria-label="Command" placeholder="Type a command" />
              <UpCaret type="button" aria-label="Command history"><Caret w={10} c="#5b5b5b" /></UpCaret>
            </CommandField>
          </Command>
        </Viewport>
      </Work>
      <Strip />

      <StatusRow>
        <DocTabs $h={30} aria-label="Layouts">
          <MenuButton $w={51} aria-label="Layouts menu"><Icon n="menu" /></MenuButton>
          <ActiveTab $skew={11} $end={20}><button>Model</button></ActiveTab>
          <DocTab>Layout1</DocTab><Slash />
          <DocTab>Layout2</DocTab><Slash />
          <Tool $w={42} aria-label="New layout"><Icon n="plus" /></Tool><Slash />
        </DocTabs>
        <StatusTools>
          <Segment><StatusButton $w={59}>MODEL</StatusButton></Segment>
          <Segment>
            <StatusButton $w={29} $on aria-label="Grid"><Icon n="gridon" /></StatusButton>
            <StatusButton $w={31} aria-label="Snap"><Icon n="dots" /></StatusButton>
            <StatusButton $w={20} aria-label="Snap options"><Caret w={10} /></StatusButton>
          </Segment>
          <Segment>
            <StatusButton $w={31} aria-label="Ortho"><Icon n="ortho" /></StatusButton>
            <StatusButton $w={29} aria-label="Polar"><Icon n="polar" /></StatusButton>
            <StatusButton $w={20} aria-label="Polar options"><Caret w={10} /></StatusButton>
            <StatusButton $w={31} aria-label="Isodraft"><Icon n="iso" /></StatusButton>
            <StatusButton $w={20} aria-label="Isodraft options"><Caret w={10} /></StatusButton>
            <StatusButton $w={32} aria-label="Object snap tracking"><Icon n="otrack" /></StatusButton>
            <StatusButton $w={28} $on aria-label="Object snap"><Icon n="osnap" /></StatusButton>
            <StatusButton $w={20} aria-label="Object snap options"><Caret w={10} /></StatusButton>
          </Segment>
          <Segment>
            <StatusButton $w={29} $on aria-label="Annotation visibility"><Icon n="ann1" /></StatusButton>
            <StatusButton $w={32} aria-label="Auto scale"><Icon n="ann2" /></StatusButton>
            <StatusButton $w={29} aria-label="Annotation scale"><Icon n="ann3" /></StatusButton>
            <StatusButton $w={26}>1:1</StatusButton>
            <StatusButton $w={16} aria-label="Scale list"><Caret w={10} /></StatusButton>
          </Segment>
          <Segment>
            <StatusButton $w={30} aria-label="Workspace"><Icon n="gear" /></StatusButton>
            <StatusButton $w={20} aria-label="Workspace list"><Caret w={10} /></StatusButton>
          </Segment>
          <Segment><StatusButton $w={29} aria-label="Annotation monitor"><Icon n="plus" /></StatusButton></Segment>
          <Segment><StatusButton $w={30} aria-label="Isolate objects"><Icon n="isolate" /></StatusButton></Segment>
          <Segment><StatusButton $w={4} aria-label="Status divider" /></Segment>
          <Segment><StatusButton $w={29} aria-label="Clean screen"><Icon n="full" /></StatusButton></Segment>
          <Segment><StatusButton $w={30} aria-label="Customization"><Icon n="menu" /></StatusButton></Segment>
        </StatusTools>
      </StatusRow>

      <Taskbar>
        <TaskButton $w={60} aria-label="Start menu"><Icon n="win" s={20} h={21} /></TaskButton>
        <TaskButton $w={60} aria-label="Windows search"><Icon n="tsearch" s={28} /></TaskButton>
        <TaskButton $w={59} aria-label="Task view"><Icon n="taskview" /></TaskButton>
        <Apps>
          <TaskButton $w={51} $on aria-label="Chrome"><Icon n="chrome" s={31} /></TaskButton>
          <TaskButton $w={73} aria-label="File Explorer"><Icon n="folder" s={28} /></TaskButton>
          <TaskButton $w={51} $on aria-label="AutoCAD"><AcadMark><Icon n="acad" s={28} h={31} /><span><b>A</b><small>CAD</small></span></AcadMark></TaskButton>
        </Apps>
        <Tray>
          <TaskButton $w={35} aria-label="Get help"><Icon n="thelp" s={31} /></TaskButton>
          <TaskButton $w={82} aria-label="News"><Icon n="news" s={30} h={20} /></TaskButton>
        </Tray>
        <TrayIcons>
          {trayItems.map(([n, label, w]) => <TaskButton key={n} $w={w} aria-label={label}><Icon n={n} /></TaskButton>)}
          <TaskButton $w={42} aria-label="Input language"><Lang>한</Lang></TaskButton>
          <Clock>오후 9:37<br />2023-10-16</Clock>
          <NoticeButton aria-label="Notifications"><Icon n="notice" s={20} h={21} /><Count>1</Count></NoticeButton>
          <PeekLine />
        </TrayIcons>
      </Taskbar>

      <Callout aria-hidden="true">
        <rect x="653.500" y="65.500" width="152" height="138" fill="none" stroke="#ff0000" strokeWidth="3" strokeDasharray="5 4" />
        <path d="M541 89v19l5-4 3 7 4-1-3-7h6z" fill="#fff" stroke="#111" />
      </Callout>
    </Page>
  );
}
